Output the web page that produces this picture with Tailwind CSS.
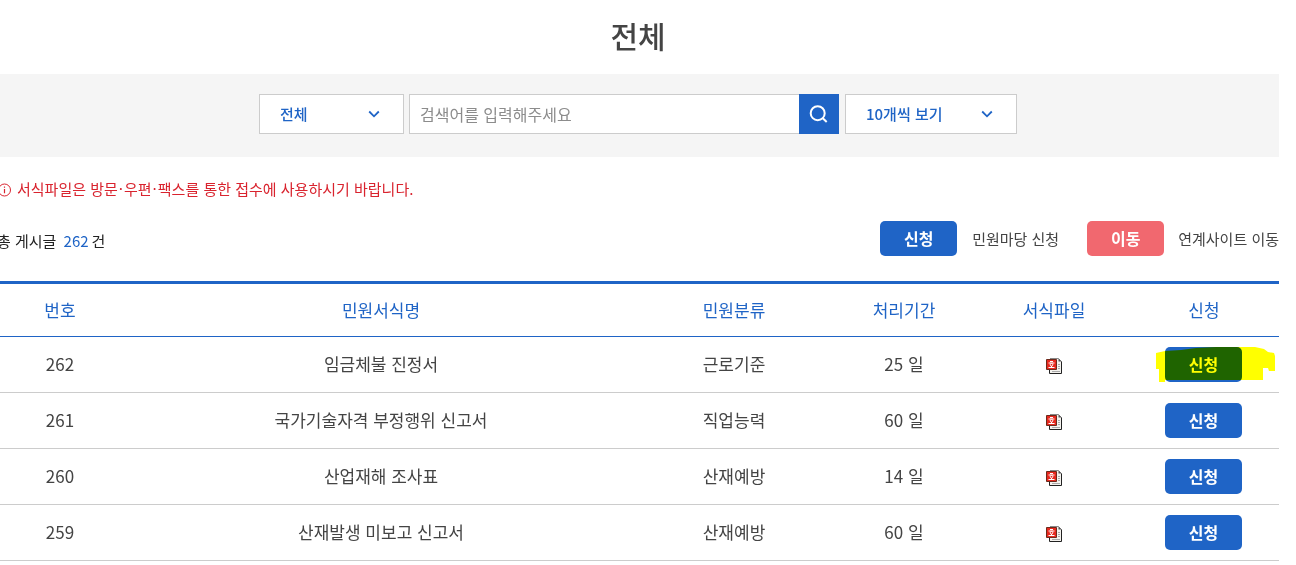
<!DOCTYPE html>
<html lang="ko">
<head>
<meta charset="utf-8">
<meta name="viewport" content="width=device-width, initial-scale=1">
<title>전체</title>
<script src="https://cdn.jsdelivr.net/npm/@tailwindcss/browser@4"></script>
</head>
<body class="overflow-x-hidden bg-white font-['Noto_Sans_CJK_KR',sans-serif] text-[#444]">
<svg class="hidden" aria-hidden="true">
  <symbol id="doc" viewBox="0 0 16 16">
    <path d="M4 .5h8.500l3 3v12H4z" fill="#f4f2ee"/>
    <path d="M4 .5h8.500l3 3" fill="none" stroke="#888"/>
    <path d="M15.500 3.500v12H3.500V12" fill="none" stroke="#222"/>
    <path d="M12.500 .5v3h3z" fill="#555"/>
    <path d="M12 6.500h2M12 8.500h2M12 10.500h2M6 13.500h8" stroke="#aaa"/>
    <path d="M.5 1.500h10v10H.5z" fill="#e8281e" stroke="#6b2a1c"/>
    <path d="M4 3.500h3M2.500 5h6M5.500 8v2M2.500 9.500h6" stroke="#fff" fill="none"/>
    <circle cx="5.500" cy="6.700" r="1.300" stroke="#fff" fill="none"/>
  </symbol>
</svg>
<main class="mr-[17px] -ml-[3px]">
  <h1 class="flex h-[74px] items-center justify-center pb-1 text-[30px] font-medium">전체</h1>

  <form class="flex h-[83px] items-center justify-center bg-[#f5f5f5] pb-[3px] text-[15px]">
    <div class="relative mr-[5px]">
      <select aria-label="분류" class="block h-10 w-[145px] appearance-none border border-[#ccc] bg-white pl-5 font-medium text-[#1f64c6]"><option>전체</option></select>
      <svg class="pointer-events-none absolute top-4 right-6 h-2 w-3" viewBox="0 0 12 8" fill="none" stroke="#1f64c6" stroke-width="1.800"><path d="M1.200 1.500 6 6.300l4.800-4.800"/></svg>
    </div>
    <input type="text" aria-label="검색어" placeholder="검색어를 입력해주세요" class="h-10 w-[390px] border border-r-0 border-[#ccc] bg-white pl-2.5 text-base placeholder:text-[#8c8c8c]">
    <button type="button" aria-label="검색" class="mr-1.5 flex h-10 w-10 items-center justify-center bg-[#1f64c6]">
      <svg class="h-5 w-5" viewBox="0 0 20 20" fill="none" stroke="#fff" stroke-width="2"><circle cx="8.700" cy="9.200" r="7"/><path d="m13.800 14.300 3.900 3.700"/></svg>
    </button>
    <div class="relative">
      <select aria-label="보기 개수" class="block h-10 w-[172px] appearance-none border border-[#ccc] bg-white pl-5 font-medium text-[#1f64c6]"><option>10개씩 보기</option></select>
      <svg class="pointer-events-none absolute top-4 right-6 h-2 w-3" viewBox="0 0 12 8" fill="none" stroke="#1f64c6" stroke-width="1.800"><path d="M1.200 1.500 6 6.300l4.800-4.800"/></svg>
    </div>
  </form>

  <div class="flex h-16 items-center gap-1.5 pt-px text-[15px] text-[#d9232e]">
    <svg class="h-3.5 w-3.5" viewBox="0 0 14 14" fill="none" stroke="#d9232e"><circle cx="7.500" cy="7" r="6"/><path d="M7.500 6v4.300M7.500 3.500v1.300" stroke-width="1.200"/></svg>
    <p>서식파일은 방문<span class="mx-px">·</span>우편<span class="mx-px">·</span>팩스를 통한 접수에 사용하시기 바랍니다.</p>
  </div>

  <div class="flex h-[60px] items-start justify-between text-[15px]">
    <p class="pt-[9px] text-[#222]">총 게시글 <span class="mx-[3px] text-[#1f64c6]">262</span>건</p>
    <div class="flex items-center">
      <button type="button" class="h-[35px] w-[77px] rounded-[5px] bg-[#1f64c6] pb-0.5 text-base font-bold text-white">신청</button>
      <span class="ml-[15px] pt-0.5">민원마당 신청</span>
      <button type="button" class="ml-7 h-[35px] w-[77px] rounded-[5px] bg-[#f1686f] pb-0.5 text-base font-bold text-white">이동</button>
      <span class="ml-[14px] pt-0.5">연계사이트 이동</span>
    </div>
  </div>

  <table class="w-full table-fixed border-collapse text-center text-[17px]">
    <colgroup><col class="w-[126px]"><col><col class="w-[190px]"><col class="w-[150px]"><col class="w-[150px]"><col class="w-[150px]"></colgroup>
    <thead class="border-t-3 border-b border-t-[#1f64c6] border-b-[#1f64c6] text-[#1f64c6]">
      <tr class="h-[54px]"><th class="font-normal">번호</th><th class="font-normal">민원서식명</th><th class="font-normal">민원분류</th><th class="font-normal">처리기간</th><th class="font-normal">서식파일</th><th class="font-normal">신청</th></tr>
    </thead>
    <tbody class="[&_td:last-child]:pr-px [&_td:not(:last-child)]:pb-0.5">
      <tr class="h-14 border-b border-[#ccc]">
        <td>262</td><td>임금체불 진정서</td><td>근로기준</td><td>25 일</td>
        <td><a href="#" aria-label="서식파일" class="inline-block align-middle"><svg class="h-4 w-4"><use href="#doc"/></svg></a></td>
        <td><div class="relative mx-auto h-[35px] w-[77px]">
          <button type="button" class="block h-full w-full rounded-[5px] bg-[#1f64c6] pb-px text-base font-bold text-white">신청</button>
          <svg class="pointer-events-none absolute top-0 -left-[9px] h-[35px] w-[120px] mix-blend-multiply" viewBox="0 0 120 35" fill="#ff0"><path d="M0 6 9 4 25 3 40 1 60 0h39l9 2 4 3 6 1 1 3v15h-6l-1-3h-5v12H86v0H9v2H3V22H0z"/></svg>
        </div></td>
      </tr>
      <tr class="h-14 border-b border-[#ccc]">
        <td>261</td><td>국가기술자격 부정행위 신고서</td><td>직업능력</td><td>60 일</td>
        <td><a href="#" aria-label="서식파일" class="inline-block align-middle"><svg class="h-4 w-4"><use href="#doc"/></svg></a></td>
        <td><button type="button" class="mx-auto block h-[35px] w-[77px] rounded-[5px] bg-[#1f64c6] pb-px text-base font-bold text-white">신청</button></td>
      </tr>
      <tr class="h-14 border-b border-[#ccc]">
        <td>260</td><td>산업재해 조사표</td><td>산재예방</td><td>14 일</td>
        <td><a href="#" aria-label="서식파일" class="inline-block align-middle"><svg class="h-4 w-4"><use href="#doc"/></svg></a></td>
        <td><button type="button" class="mx-auto block h-[35px] w-[77px] rounded-[5px] bg-[#1f64c6] pb-px text-base font-bold text-white">신청</button></td>
      </tr>
      <tr class="h-14 border-b border-[#ccc]">
        <td>259</td><td>산재발생 미보고 신고서</td><td>산재예방</td><td>60 일</td>
        <td><a href="#" aria-label="서식파일" class="inline-block align-middle"><svg class="h-4 w-4"><use href="#doc"/></svg></a></td>
        <td><button type="button" class="mx-auto block h-[35px] w-[77px] rounded-[5px] bg-[#1f64c6] pb-px text-base font-bold text-white">신청</button></td>
      </tr>
    </tbody>
  </table>
</main>
</body>
</html>
